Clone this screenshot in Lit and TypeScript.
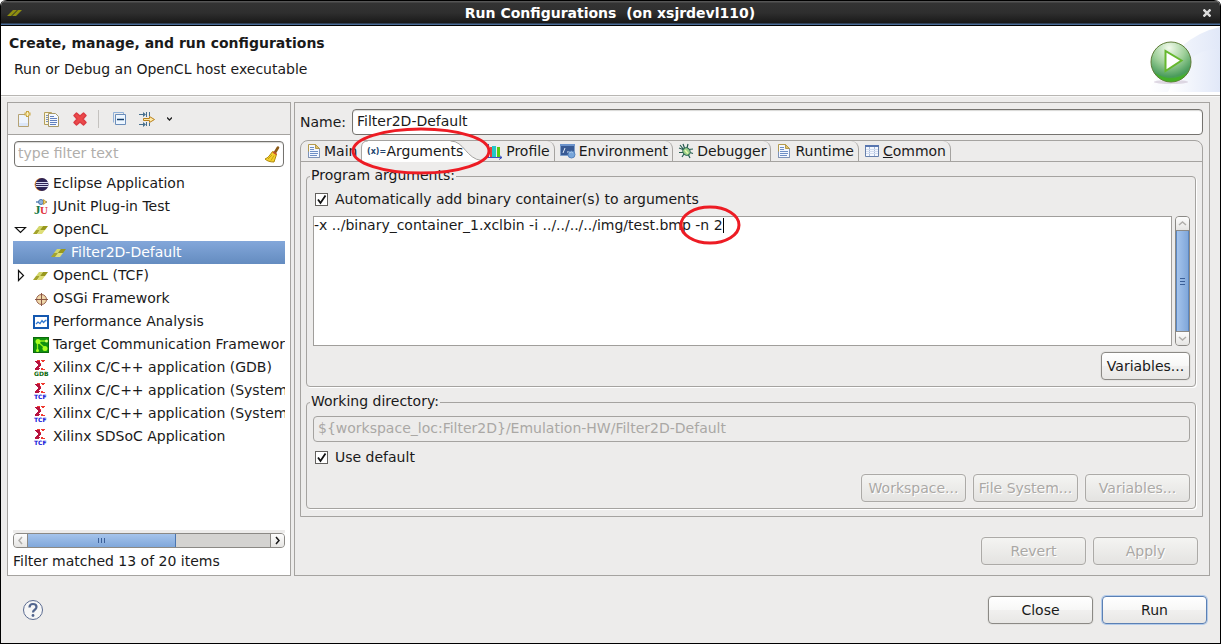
import { LitElement, html, css, svg } from "lit";
import { customElement, property } from "lit/decorators.js";
import { classMap } from "lit/directives/class-map.js";

const xilinx = (label: string, color: string) => svg`
  <path d="M4 0h3v1h-3zM8 0h4v1h-1v1h-2v-1h-1zM6 3h2v1h-2zM7 5h1v1h-1zM8 8h2v1h2v1h-4z" fill="#f03a30"/>
  <path d="M2 1h5v1h-5zM3 2h4v1h-4zM4 3h3v1h-3zM5 4h3v2h-3zM4 6h3v1h-3zM3 7h3v1h-3zM2 8h5v1h-5zM2 9h4v1h-4z" fill="#b8123e"/>
  <text x="1" y="16" font-family="DejaVu Sans, sans-serif" font-size="6" font-weight="bold" fill=${color}>${label}</text>`;

const doc = svg`
  <path d="M2.500 1.500h7l4 4v9h-11z" fill="#f4f8ff" stroke="#b59a4c"/>
  <path d="M13.500 6v8.500h-11v-6" fill="none" stroke="#7f93b8"/>
  <path d="M9.500 1.500v4h4z" fill="#e3c36a" stroke="#b59a4c"/>
  <path d="M4 4.500h4M4 6.500h4M4 8.500h8M4 10.500h8M4 12.500h7" stroke="#6f8fc4"/>`;

const opencl = svg`
  <path d="M6 4h4l-3 4h-4z" fill="#d3d76a"/><path d="M10 4h5l-3 4h-5z" fill="#98981c"/>
  <path d="M3 8h4l-3 4h-4z" fill="#a4a42c"/><path d="M7 8h5l-3 4h-5z" fill="#dede78"/>`;

const ICONS: Record<string, unknown> = {
  brand: svg`<path d="M6 5h4l-6 6h-4zM11 5h4l-6 6h-4z" fill="#8e8e10"/>`,
  opencl,
  doc,
  newdoc: svg`
    <path d="M2.500 3.500h10v12h-10z" fill="#eef4fd" stroke="#b5a273"/>
    <path d="M3 12h9v3h-9z" fill="#dbe6f8"/>
    <path d="M11.500 0v6M8.500 3h6" stroke="#c9a642" stroke-width="3"/>
    <path d="M11.500 1v4M9.500 3h4" stroke="#fdf3c0" stroke-width="1.200"/>`,
  copy: svg`
    <path d="M.500 1.500h7l2 2v10h-9z" fill="#fbf6e0" stroke="#b5a05c"/>
    <path d="M2 4.500h2M2 6.500h2M2 8.500h2M2 10.500h2" stroke="#7890be"/>
    <path d="M4.500 2.500h7l3 3v10h-10z" fill="#f4f8ff" stroke="#a99a68"/>
    <path d="M6 5.500h4M6 7.500h7M6 9.500h7M6 11.500h7M6 13.500h6" stroke="#6281bd"/>`,
  remove: svg`<path d="M2 4.500L4.500 2 8 5 11.500 2 14 4.500 11 8 14 11.500 11.500 14 8 11 4.500 14 2 11.500 5 8z" fill="#ec4a4a" stroke="#dc3c44" stroke-width="1.500" stroke-linejoin="round"/>`,
  collapse: svg`
    <path d="M2.500 11.500v-10h10v2" fill="none" stroke="#8fb0d8"/>
    <path d="M4.500 3.500h10v10h-10z" fill="#edf6ff" stroke="#6b8db9"/>
    <path d="M6 8.500h7" stroke="#16406f" stroke-width="1.500"/>`,
  filter: svg`
    <path d="M0 3.500h6M0 13.500h6" stroke="#47708f"/><path d="M4 1l3 2.500-3 2.500zM4 11l3 2.500-3 2.500z" fill="#47708f"/>
    <path d="M7.500 1v5M7.500 11v4M10.500 1v4M10.500 12v3" stroke="#47708f"/>
    <path d="M4.500 7.500h6v-2l5 3-5 3v-2h-6z" fill="#ffe9a6" stroke="#b9811d"/>`,
  broom: svg`
    <path d="M14 1.500l-3 5" stroke="#8c5a16" stroke-width="2.600" stroke-linecap="round"/>
    <path d="M8.500 5.500l4 2.500-.5 2c-1 2-1 4-2 6-4 0-7-1-9-3 3-1 5-4 7.500-7.500z" fill="#f3d02c" stroke="#b08a0c"/>
    <path d="M4 13l4-4M7 14.500l3-5" stroke="#c99f12"/><path d="M9 6l3.500 2.300" stroke="#c94f2b" stroke-width="1.500"/>`,
  eclipse: svg`
    <circle cx="8" cy="8.500" r="6.500" fill="#ef9a3e"/><circle cx="9" cy="8.500" r="6.500" fill="#2c2255"/>
    <path d="M3 6.500h12M3 8.500h12M3 10.500h12" stroke="#d8daf2"/>`,
  junit: svg`
    <path d="M3 3h3M11 3h3" stroke="#5f87b8" stroke-width="1.500"/><circle cx="8" cy="3" r="2.500" fill="#8fb2dc" stroke="#4e78ac"/>
    <path d="M10.500 .5l3 2.500-3 2.500z" fill="#f2cf66" stroke="#b98c20" stroke-width=".7"/>
    <text x="1" y="15" font-family="Liberation Serif, serif" font-size="13" font-weight="bold" fill="#137a45">J</text>
    <text x="7" y="15" font-family="Liberation Serif, serif" font-size="11" font-weight="bold" fill="#e0323c">U</text>`,
  osgi: svg`
    <circle cx="8.500" cy="8.500" r="5" fill="#efd7a9" stroke="#9c6650"/>
    <path d="M8.500 2v13M2 8.500h13" stroke="#8b5744"/>`,
  perf: svg`
    <path d="M1 2h14v12h-14z" fill="#fff" stroke="#1458b0" stroke-width="2"/>
    <path d="M3 10l2-2 2 1.500 2-3 1.500 2 2-2h1" fill="none" stroke="#2f77d0" stroke-width="1.300"/>`,
  target: svg`
    <path d="M0 0h16v16h-16z" fill="#0b6a0b"/><path d="M1 1h14v14h-14z" fill="#109010"/>
    <path d="M5 5l7 6M4.500 4v9M5 4h9" stroke="#8ff018" stroke-width="1.300"/>
    <circle cx="5" cy="4.500" r="2.500" fill="#a8ff20"/><circle cx="12" cy="11.500" r="2.500" fill="#a8ff20"/>
    <circle cx="4.500" cy="13.500" r="1.500" fill="#a8ff20"/><circle cx="13.500" cy="4" r="1.500" fill="#d5ff6a"/>`,
  gdb: xilinx("GDB", "#0a6a0a"),
  tcf: xilinx("TCF", "#1010d8"),
  vars: svg`<text x="1" y="11" font-family="DejaVu Sans, sans-serif" font-size="8" font-weight="bold" fill="#24466f">(x)=</text>`,
  profile: svg`
    <path d="M1.500 1v14" stroke="#3d5ba8"/><path d="M0 14.500h15M12 12l3 2.500-3 2" fill="none" stroke="#3b50c0"/>
    <path d="M3 4h2v10h-2z" fill="#e7403c"/><path d="M5 3h4v11h-4z" fill="#23c8c8"/><path d="M10 4h3v10h-3z" fill="#58cc10"/>`,
  env: svg`
    <path d="M.500 1.500h14v11h-14z" fill="#385a94" stroke="#7f9fca"/><path d="M0 1h15v2h-15z" fill="#6c94cd"/>
    <path d="M3 10l2-5M7 9h3" stroke="#e3edf9"/><circle cx="11.500" cy="11.500" r="3.500" fill="#78a6da" stroke="#5784bd"/>
    <path d="M9 10q3-2 4 0" stroke="#a8c8ea" fill="none"/>`,
  bug: svg`
    <path d="M5 1l1.500 4M10 1l-1 4M1 5l4 1.500M15 6l-4 .5M1 9.500h4M15 10.500l-3-1M4 14l2-3M12 15l-1.500-3M2 2l4 5" stroke="#245c50" stroke-width="1.200"/>
    <ellipse cx="8.500" cy="8.500" rx="3.500" ry="4" fill="#9bd08a" stroke="#266354" transform="rotate(-35 8.500 8.500)"/>
    <path d="M7 7l3 3.500" stroke="#e9f8b0" stroke-width="1.500"/>`,
  table: svg`
    <path d="M1.500 2.500h13v11h-13z" fill="#f4f8ff" stroke="#6780ac"/><path d="M1 2h14v2h-14z" fill="#5876b0"/>
    <path d="M5.500 4v9M10.500 4v9" stroke="#a9bbda"/><path d="M2 6.500h12M2 8.500h12M2 10.500h12" stroke="#d3ddef"/>`,
};

@customElement("ui-icon")
class UiIcon extends LitElement {
  @property() name = "";
  static styles = css`
    :host { display: block; flex: none; width: 16px; height: 16px; }
    .glyph { display: block; overflow: visible; }
  `;
  render() {
    return html`<svg class="glyph" width="16" height="16" viewBox="0 0 16 16" aria-hidden="true">${ICONS[this.name]}</svg>`;
  }
}

@customElement("ui-scrollbar")
class UiScrollbar extends LitElement {
  @property({ type: Boolean, reflect: true }) vertical = false;
  @property({ type: Number }) extent = 100;
  @property({ type: Boolean }) more = false;
  static styles = css`
    :host { display: flex; flex: none; box-sizing: border-box; height: 15px; border: 1px solid #8b8985; border-radius: 4px; background: #d4d3d1; overflow: hidden; }
    :host([vertical]) { flex-direction: column; height: auto; width: 15px; }
    .step { flex: none; display: grid; place-items: center; width: 13px; height: 13px; padding: 0; border: 0; background: linear-gradient(#fdfdfd, #e6e5e3); color: #b0aeab; }
    .step.on { color: #1a1a1a; }
    .track { flex: 1; display: flex; min-height: 0; border: solid #8b8985; border-width: 0 1px; }
    .thumb { box-sizing: border-box; display: grid; place-items: center; background: linear-gradient(#a5c4ec, #80a7da); border-right: 1px solid #4a75b0; color: #3b5f98; }
    :host([vertical]) .track { flex-direction: column; border-width: 1px 0; }
    :host([vertical]) .thumb { width: 100%; border: solid #5c88c2; border-width: 0 1px; background: linear-gradient(90deg, #a5c4ec, #80a7da); }
    .mark { display: block; fill: none; stroke: currentColor; }
  `;
  render() {
    const arrow = (d: string) => html`<svg class="mark" width="9" height="9" viewBox="0 0 9 9" stroke-width="1.500"><path d=${d} /></svg>`;
    const size = this.vertical ? `height:${this.extent}%` : `width:${this.extent}%`;
    return html`
      <button class="step" aria-label="Scroll back">${arrow(this.vertical ? "M1 6l3.500-3 3.500 3" : "M6 1l-3 3.500 3 3.500")}</button>
      <div class="track"><div class="thumb" style=${size}>
        <svg class="mark" width="9" height="9" viewBox="0 0 9 9"><path d=${this.vertical ? "M2 1.500h5M2 4.500h5M2 7.500h5" : "M1.500 2v5M4.500 2v5M7.500 2v5"} /></svg>
      </div></div>
      <button class=${classMap({ step: true, on: this.more })} aria-label="Scroll forward">${arrow(this.vertical ? "M1 3l3.500 3 3.500-3" : "M3 1l3 3.500-3 3.500")}</button>`;
  }
}

interface Item { label: string; icon: string; state?: "open" | "closed"; child?: boolean; }

const ITEMS: Item[] = [
  { label: "Eclipse Application", icon: "eclipse" },
  { label: "JUnit Plug-in Test", icon: "junit" },
  { label: "OpenCL", icon: "opencl", state: "open" },
  { label: "Filter2D-Default", icon: "opencl", child: true },
  { label: "OpenCL (TCF)", icon: "opencl", state: "closed" },
  { label: "OSGi Framework", icon: "osgi" },
  { label: "Performance Analysis", icon: "perf" },
  { label: "Target Communication Framework", icon: "target" },
  { label: "Xilinx C/C++ application (GDB)", icon: "gdb" },
  { label: "Xilinx C/C++ application (System Debugger)", icon: "tcf" },
  { label: "Xilinx C/C++ application (System Debugger on QEMU)", icon: "tcf" },
  { label: "Xilinx SDSoC Application", icon: "tcf" },
];

const TABS = [
  { label: "Main", icon: "doc" },
  { label: "Arguments", icon: "vars" },
  { label: "Profile", icon: "profile" },
  { label: "Environment", icon: "env" },
  { label: "Debugger", icon: "bug" },
  { label: "Runtime", icon: "doc" },
  { label: "Common", icon: "table" },
];

@customElement("app-root")
class AppRoot extends LitElement {
  static styles = css`
    :host { display: block; font: 14px/20px "DejaVu Sans", sans-serif; color: #1a1a1a; }
    * { box-sizing: border-box; }
    button, input, textarea { font: inherit; color: inherit; margin: 0; }
    .window { display: flex; flex-direction: column; min-height: 100vh; background: #edeceb; border: solid #000; border-width: 0 1px 1px; border-radius: 6px 6px 0 0; }
    .titlebar { display: grid; grid-template-columns: 16px 1fr 20px; align-items: center; height: 26px; padding: 0 3px 0 6px; color: #fff; background: linear-gradient(#000 0 1px, #555 1px 2px, #333 3px, #2e2e2e 50%, #191919 23px, #4a6c98 24px 25px, #000 25px); border-radius: 6px 6px 0 0; }
    .title { margin: 0; font-size: 14px; line-height: 24px; text-align: center; white-space: pre; }
    .close { display: grid; place-items: center; width: 20px; height: 20px; padding: 0; border: 0; background: none; color: #ddd; }
    .banner { display: flex; justify-content: space-between; height: 70px; background: #fff; border-bottom: 1px solid #b8b6b3; }
    .heading { padding: 7px 8px; }
    .heading h2 { margin: 0; font-size: 14px; line-height: 20px; }
    .heading p { margin: 6px 5px; }
    .main { flex: 1; display: flex; gap: 3px; padding: 5px 10px 0 6px; border-top: 1px solid #f8f8f7; }
    .panel { border: 1px solid #a5a3a0; display: flex; flex-direction: column; }
    .left { width: 284px; flex: none; background: #fff; }
    .tools { display: flex; align-items: center; height: 32px; padding: 0 8px; background: #edeceb; border-bottom: 1px solid #a5a3a0; }
    .tool { display: block; padding: 0; border: 0; background: none; margin-right: 12px; }
    .rule { width: 1px; height: 18px; background: #c4c2bf; margin: 0 12px 0 -2px; }
    .caret-down { display: block; }
    .field { min-width: 0; height: 26px; padding: 0 4px 2px; border: 1px solid #75736f; border-radius: 4px; background: #fff; outline: 0; box-shadow: inset 0 1px 1px #d8d7d5; }
    .search { display: flex; align-items: center; margin: 6px; padding: 0 3px; }
    .search input { flex: 1; min-width: 0; border: 0; padding: 0 0 2px; outline: 0; background: none; }
    .search input::placeholder { color: #b0aeab; opacity: 1; }
    .tree { flex: 1; list-style: none; margin: -1px 5px 0; padding: 0; overflow: hidden; }
    .row { display: flex; align-items: center; height: 23px; gap: 4px; white-space: nowrap; line-height: 18px; }
    .row span { height: 20px; }
    .child { padding-left: 18px; }
    .selected { background: linear-gradient(#83a7da, #648cc0); color: #fff; }
    .twist { flex: none; width: 16px; height: 16px; }
    .hscroll { border-top: 3px solid #edeceb; margin: 0 5px; }
    .status { margin: 3px 5px 4px; }
    .right { flex: 1; min-width: 0; padding: 6px 6px 10px 5px; }
    .name { display: flex; align-items: center; gap: 6px; line-height: 18px; }
    .name .field { flex: 1; }
    .folder { flex: 1; display: flex; flex-direction: column; margin-top: 5px; border: 1px solid #a5a3a0; border-radius: 8px 8px 0 0; }
    .tabs { display: flex; height: 21px; border-bottom: 1px solid #a5a3a0; }
    .tab { position: relative; display: flex; align-items: center; gap: 3px; height: 20px; padding: 0 4px 0 5px; border: 0; border-right: 1px solid #a5a3a0; border-radius: 0 8px 0 0; background: none; white-space: nowrap; }
    .tab.first { gap: 2px; border-right: 0; }
    .tab.active { gap: 4px; padding-right: 19px; border: 0; z-index: 1; }
    .tab.active > * { position: relative; }
    .tab.active .shape { position: absolute; top: 0; left: 0; width: 100%; height: 21px; overflow: visible; }
    .ring { fill: none; stroke: #ed1c24; stroke-width: 3; overflow: visible; pointer-events: none; }
    .tab.active .ring { position: absolute; left: -9px; top: -13px; }
    .pages { flex: 1; display: flex; flex-direction: column; gap: 5px; padding: 4px 6px 7px 5px; }
    .group { margin: 0; min-width: 0; padding: 0 5px 6px 6px; border: 1px solid #a5a3a0; border-radius: 4px; box-shadow: 1px 1px 0 #fff; display: flex; flex-direction: column; }
    .group legend { padding: 0 1px; margin-left: -3px; line-height: 18px; height: 20px; }
    .grow { flex: 1; }
    .inner { display: flex; flex-direction: column; height: 100%; padding-top: 3px; }
    .check { display: flex; align-items: center; gap: 7px; padding-left: 2px; height: 20px; }
    .box { display: grid; width: 13px; height: 13px; }
    .box > * { grid-area: 1 / 1; }
    .box input { appearance: none; width: 13px; height: 13px; border: 1px solid #63615e; background: #fff; }
    .box svg { pointer-events: none; }
    .editor { position: relative; flex: 1; display: flex; gap: 3px; margin: 7px 0 6px; min-height: 96px; }
    .editor textarea { flex: 1; min-width: 0; resize: none; outline: 0; border: 1px solid #a09e9b; background: #fff; padding: 0; line-height: 17px; overflow: hidden; }
    .cursor { position: absolute; left: 410px; top: 2px; width: 1px; height: 15px; background: #000; }
    .editor .ring { position: absolute; left: 367px; top: -10px; }
    .field:disabled { background: #edeceb; color: #aaa8a5; border-color: #a5a3a0; box-shadow: none; }
    .wd { margin-top: 4px; }
    .usedef { margin: 5px 0 7px; }
    .buttons { display: flex; justify-content: flex-end; gap: 7px; }
    .btn { width: 105px; height: 28px; padding: 0; border: 1px solid #8b8985; border-radius: 4px; background: linear-gradient(#fff, #f7f7f6 50%, #f1f0ef 51%, #e8e7e5); box-shadow: 0 0 0 1px #e4e3e1; }
    .btn:disabled { color: #aaa8a5; text-shadow: 1px 1px 0 #fff; border-color: #acaaa7; background: linear-gradient(#f4f4f2, #e4e3e1); box-shadow: 0 0 0 1px #f0efee; }
    .btn.small { width: 89px; }
    .btn.primary { border-color: #5b80b4; box-shadow: 0 0 0 1px #b3cbea; }
    .apply { margin: 20px 5px 0 0; }
    .footer { display: flex; align-items: center; justify-content: space-between; height: 67px; padding: 0 13px 0 21px; }
    .footer .buttons { gap: 9px; }
    .help { padding: 0; border: 0; background: none; }
    .help svg, .art { display: block; }
  `;

  private tick() {
    return html`<svg width="13" height="13" viewBox="0 0 13 13"><path d="M3 6.500l2.500 3.500 5-7.500" fill="none" stroke="#111" stroke-width="1.800" /></svg>`;
  }

  private twist(item: Item) {
    return html`<svg class="twist" viewBox="0 0 16 16" fill="none" stroke="#111" stroke-width="1.200">
      ${item.state === "open" ? svg`<path d="M2.500 5.500h10l-5 5z"/>` : item.state === "closed" ? svg`<path d="M5.500 2.500v10l5-5z"/>` : null}</svg>`;
  }

  private tab(t: { label: string; icon: string }) {
    const active = t.label === "Arguments";
    return html`<button role="tab" aria-selected=${active} class=${classMap({ tab: true, active, first: t.label === "Main" })}>
      ${active ? html`<svg class="shape" viewBox="0 0 124 21" preserveAspectRatio="none"><path d="M0 21V6Q1 0 7 0H92C106 0 108 18 124 19.500V21z" fill="#fff"/><path d="M.500 21V6Q1 0 7 0M92 0C106 0 108 18 124 19.500" fill="none" stroke="#a5a3a0"/></svg>` : null}
      <ui-icon name=${t.icon}></ui-icon>
      <span>${t.label === "Common" ? html`<u>C</u>ommon` : t.label}</span>
      ${active ? html`<svg class="ring" width="138" height="46"><ellipse cx="69" cy="23" rx="68" ry="22" /></svg>` : null}
    </button>`;
  }

  render() {
    return html`<div class="window">
      <header class="titlebar">
        <ui-icon name="brand"></ui-icon>
        <h1 class="title">Run Configurations  (on xsjrdevl110)</h1>
        <button class="close" aria-label="Close window"><svg width="8" height="8" viewBox="0 0 8 8" stroke="currentColor" stroke-width="2.400"><path d="M.500.500l7 7M7.500.500l-7 7" /></svg></button>
      </header>
      <section class="banner">
        <div class="heading"><h2>Create, manage, and run configurations</h2><p>Run or Debug an OpenCL host executable</p></div>
        <svg class="art" width="72" height="66" viewBox="0 0 72 66" aria-hidden="true">
          <defs>
            <linearGradient id="sky" x1="0" x2="1"><stop offset="0" stop-color="#fff"/><stop offset="1" stop-color="#e1e8f8"/></linearGradient>
            <radialGradient id="ball" cx=".45" cy=".15" r=".9"><stop offset="0" stop-color="#f2faec"/><stop offset=".45" stop-color="#9fd09a"/><stop offset=".8" stop-color="#4a9c5c"/><stop offset="1" stop-color="#48b428"/></radialGradient>
          </defs>
          <path d="M0 66Q28 10 72 1V66z" fill="url(#sky)"/>
          <path d="M20 66Q36 24 72 22V66z" fill="url(#sky)"/>
          <ellipse cx="23" cy="56" rx="17" ry="2" fill="#cbbfd0" opacity=".6"/>
          <circle cx="23" cy="36" r="20" fill="url(#ball)" stroke="#5f7c38"/>
          <path d="M7 47a19 19 0 0 0 32 0q-16 10-32 0" fill="#43b41c" opacity=".7"/>
          <path d="M17.500 25v20l16-10.500z" fill="#fff" stroke="#66b82e" stroke-width="2"/>
        </svg>
      </section>
      <main class="main">
        <section class="panel left">
          <div class="tools">
            <button class="tool" aria-label="New"><ui-icon name="newdoc"></ui-icon></button>
            <button class="tool" aria-label="Duplicate"><ui-icon name="copy"></ui-icon></button>
            <button class="tool" aria-label="Delete"><ui-icon name="remove"></ui-icon></button>
            <span class="rule"></span>
            <button class="tool" aria-label="Collapse all"><ui-icon name="collapse"></ui-icon></button>
            <button class="tool" aria-label="Filter"><ui-icon name="filter"></ui-icon></button>
            <svg class="caret-down" width="5" height="4" viewBox="0 0 5 4"><path d="M0 .500l2.500 2.500 2.500-2.500" fill="none" stroke="#222" stroke-width="1.300" /></svg>
          </div>
          <div class="field search"><input aria-label="Filter" placeholder="type filter text" /><ui-icon name="broom"></ui-icon></div>
          <ul class="tree" role="tree">
            ${ITEMS.map((i) => html`<li role="treeitem" class=${classMap({ row: true, child: !!i.child, selected: !!i.child })}>${this.twist(i)}<ui-icon name=${i.icon}></ui-icon><span>${i.label}</span></li>`)}
          </ul>
          <div class="hscroll"><ui-scrollbar extent="61" more></ui-scrollbar></div>
          <p class="status">Filter matched 13 of 20 items</p>
        </section>
        <section class="panel right">
          <div class="name"><label for="name">Name:</label><input id="name" class="field" .value=${"Filter2D-Default"} /></div>
          <div class="folder">
            <div class="tabs" role="tablist">${TABS.map((t) => this.tab(t))}</div>
            <div class="pages">
              <fieldset class="group grow">
                <legend>Program arguments:</legend>
                <div class="inner">
                  <label class="check"><span class="box"><input type="checkbox" checked />${this.tick()}</span>Automatically add binary container(s) to arguments</label>
                  <div class="editor">
                    <textarea aria-label="Program arguments" spellcheck="false" .value=${"-x ../binary_container_1.xclbin -i ../../../../img/test.bmp -n 2"}></textarea>
                    <ui-scrollbar vertical extent="100"></ui-scrollbar>
                    <span class="cursor"></span>
                    <svg class="ring" width="61" height="39"><ellipse cx="30" cy="19" rx="29" ry="18" /></svg>
                  </div>
                  <div class="buttons"><button class="btn small">Variables...</button></div>
                </div>
              </fieldset>
              <fieldset class="group">
                <legend>Working directory:</legend>
                <input class="field wd" aria-label="Working directory" disabled .value=${"${workspace_loc:Filter2D}/Emulation-HW/Filter2D-Default"} />
                <label class="check usedef"><span class="box"><input type="checkbox" checked />${this.tick()}</span>Use default</label>
                <div class="buttons"><button class="btn" disabled>Workspace...</button><button class="btn" disabled>File System...</button><button class="btn" disabled>Variables...</button></div>
              </fieldset>
            </div>
          </div>
          <div class="buttons apply"><button class="btn" disabled>Revert</button><button class="btn" disabled>Apply</button></div>
        </section>
      </main>
      <footer class="footer">
        <button class="help" aria-label="Help"><svg width="22" height="22" viewBox="0 0 22 22"><circle cx="11" cy="11" r="9.500" fill="#f6f6f6" stroke="#5c6c92"/><path d="M7.500 8.500Q7.500 5 11 5T14.500 8Q14.500 9.500 12.500 11 11 12 11 13.500" fill="none" stroke="#52658e" stroke-width="2.200"/><circle cx="11" cy="16.500" r="1.400" fill="#52658e"/></svg></button>
        <div class="buttons"><button class="btn">Close</button><button class="btn primary">Run</button></div>
      </footer>
    </div>`;
  }
}
